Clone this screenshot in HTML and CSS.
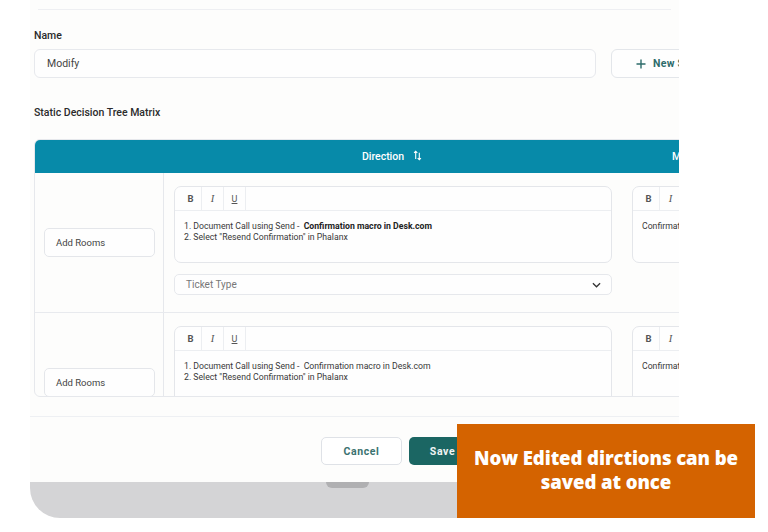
FILE: index.html
```html
<!DOCTYPE html>
<html>
<head>
<meta charset="utf-8">
<link rel="stylesheet" href="styles.css">
</head>
<body>
<div class="stage">
  <div class="modal">
    <div class="topline"></div>
    <div class="content">
      <div class="label">Name</div>
      <div class="name-row">
        <div class="input">Modify</div>
        <div class="new-btn">
          <svg class="plus" viewBox="0 0 10 10" width="10" height="10"><path d="M5 0.5V9.5M0.5 5H9.5" stroke="#2d6b6a" stroke-width="1.4" fill="none"/></svg>
          <span>New Step</span>
        </div>
      </div>
      <div class="label section">Static Decision Tree Matrix</div>
      <div class="matrix">
        <div class="mhead">
          <div class="hcell"></div>
          <div class="hcell">Direction
            <svg class="sort" viewBox="0 0 10 12" width="9" height="11"><path d="M3 10V1.5M1.2 3.2L3 1.3L4.8 3.2" stroke="#fff" stroke-width="1.2" fill="none"/><path d="M7 3V10.5M5.2 8.8L7 10.7L8.8 8.8" stroke="#fff" stroke-width="1.2" fill="none"/></svg>
          </div>
          <div class="hcell">Macro</div>
        </div>
        <div class="mrow">
          <div class="lcell"><div class="rooms">Add Rooms</div></div>
          <div class="dcell">
            <div class="editor">
              <div class="toolbar"><span class="tb b">B</span><span class="tb i">I</span><span class="tb u">U</span></div>
              <div class="etext">1. Document Call using Send - &nbsp;<strong>Confirmation macro in Desk.com</strong><br>2. Select "Resend Confirmation" in Phalanx</div>
            </div>
            <div class="select"><span>Ticket Type</span>
              <svg viewBox="0 0 10 6" width="9" height="6"><path d="M1 1L5 5L9 1" stroke="#333" stroke-width="1.4" fill="none"/></svg>
            </div>
          </div>
          <div class="mcell">
            <div class="editor">
              <div class="toolbar"><span class="tb b">B</span><span class="tb i">I</span><span class="tb u">U</span></div>
              <div class="etext">Confirmation macro</div>
            </div>
          </div>
        </div>
        <div class="mrow">
          <div class="lcell"><div class="rooms">Add Rooms</div></div>
          <div class="dcell">
            <div class="editor">
              <div class="toolbar"><span class="tb b">B</span><span class="tb i">I</span><span class="tb u">U</span></div>
              <div class="etext">1. Document Call using Send - &nbsp;Confirmation macro in Desk.com<br>2. Select "Resend Confirmation" in Phalanx</div>
            </div>
            <div class="select"><span>Ticket Type</span>
              <svg viewBox="0 0 10 6" width="9" height="6"><path d="M1 1L5 5L9 1" stroke="#333" stroke-width="1.4" fill="none"/></svg>
            </div>
          </div>
          <div class="mcell">
            <div class="editor">
              <div class="toolbar"><span class="tb b">B</span><span class="tb i">I</span><span class="tb u">U</span></div>
              <div class="etext">Confirmation macro</div>
            </div>
          </div>
        </div>
      </div>
    </div>
    <div class="sep"></div>
    <div class="footer">
      <div class="btn cancel">Cancel</div>
      <div class="btn save">Save</div>
    </div>
  </div>
  <div class="base"><div class="pill"></div></div>
</div>
<div class="callout">Now Edited dirctions can be saved at once</div>
</body>
</html>
```

FILE: styles.css
```css
* { box-sizing: border-box; }
html, body { margin: 0; padding: 0; background: #fff; }
body {
  font-family: Roboto, "Liberation Sans", sans-serif;
  color: #333;
  position: relative;
  width: 768px;
  height: 532px;
  overflow: hidden;
}
.stage {
  margin-left: 30px;
  width: 649px;
  height: 518px;
  overflow: hidden;
  border-bottom-left-radius: 30px;
  display: flex;
  flex-direction: column;
}
.modal {
  flex: none;
  width: 750px;
  height: 482px;
  background: #fdfdfc;
  padding-top: 9px;
}
.topline {
  margin-left: 8px;
  width: 633px;
  height: 1px;
  background: #eeeff2;
}
.content { padding: 0 4px; }
.label {
  margin-top: 19px;
  font-size: 10.5px;
  line-height: 13px;
  font-weight: 500;
  color: #2b2b2b;
}
.label.section { margin-top: 28px; }
.name-row {
  margin-top: 7px;
  display: flex;
  gap: 15px;
}
.input {
  width: 562px;
  height: 29px;
  border: 1px solid #e7e9ed;
  border-radius: 6px;
  background: #fefefe;
  padding-left: 12px;
  font-size: 10.5px;
  color: #444;
  display: flex;
  align-items: center;
}
.new-btn {
  width: 120px;
  height: 29px;
  border: 1px solid #e3e6ea;
  border-radius: 6px;
  background: #fefefe;
  display: flex;
  align-items: center;
  padding-left: 24px;
  gap: 7px;
  color: #2d6b6a;
  font-weight: 700;
  font-size: 10.5px;
  letter-spacing: 0.3px;
}
.matrix {
  margin-top: 20px;
  width: 730px;
  height: 258px;
  border: 1px solid #e6e8ec;
  border-radius: 6px;
  overflow: hidden;
}
.mhead, .mrow {
  display: grid;
  grid-template-columns: 129px 458px 1fr;
}
.mhead {
  height: 34px;
  background: #078aa9;
  color: #fff;
  font-size: 10.5px;
  font-weight: 500;
  margin: -1px -1px 0 -1px;
  border-radius: 6px 6px 0 0;
  border-top: 1px solid #58aec4;
}
.hcell {
  display: flex;
  align-items: center;
  justify-content: center;
  gap: 9px;
}
.mhead .hcell:last-child { justify-content: flex-start; padding-left: 51px; }
.sort { margin-top: -3px; }
.mrow {
  height: 140px;
  border-bottom: 1px solid #e8eaee;
}
.lcell {
  border-right: 1px solid #e6e8ec;
  display: flex;
  align-items: center;
  padding-left: 9px;
}
.rooms {
  width: 111px;
  height: 29px;
  border: 1px solid #e4e6ea;
  border-radius: 5px;
  background: #fefefe;
  font-size: 9.5px;
  color: #444;
  display: flex;
  align-items: center;
  padding-left: 11px;
}
.dcell { padding: 13px 10px 0 10px; }
.mcell { padding: 13px 0 0 10px; }
.editor {
  height: 77px;
  border: 1px solid #e4e6ea;
  border-radius: 7px;
  background: #fefefe;
  overflow: hidden;
}
.mcell .editor { width: 300px; }
.toolbar {
  height: 24px;
  border-bottom: 1px solid #eceef1;
  display: flex;
  padding-left: 5px;
}
.tb {
  width: 22px;
  border-right: 1px solid #eceef1;
  display: flex;
  align-items: center;
  justify-content: center;
  font-size: 9.5px;
  color: #555;
}
.tb.b { font-weight: 700; }
.tb.i { font-style: italic; font-family: "Liberation Serif", serif; font-size: 10.5px; }
.tb.u { text-decoration: underline; font-size: 9px; }
.etext {
  padding: 10px 9px;
  font-size: 8.7px;
  line-height: 11px;
  color: #383838;
  white-space: nowrap;
}
.etext strong { font-weight: 700; color: #222; }
.select {
  margin-top: 11px;
  height: 21px;
  border: 1px solid #e6e8ec;
  border-radius: 5px;
  background: #fefefe;
  display: flex;
  align-items: center;
  justify-content: space-between;
  padding: 0 10px 0 11px;
  font-size: 10px;
  color: #777;
}
.sep {
  margin-top: 19px;
  height: 1px;
  background: #eef0f3;
}
.footer {
  margin-top: 20px;
  display: flex;
  justify-content: center;
  gap: 7px;
  padding-left: 1px;
}
.btn {
  width: 81px;
  height: 28px;
  border-radius: 5px;
  display: flex;
  align-items: center;
  justify-content: center;
  font-size: 10.5px;
  font-weight: 700;
  letter-spacing: 0.6px;
}
.cancel {
  border: 1px solid #dfe2e7;
  background: #fff;
  color: #3b7270;
}
.save {
  background: #1b6663;
  color: #f0f4f4;
  padding-right: 14px;
}
.base {
  flex: none;
  height: 36px;
  background: #d4d4d6;
  padding-left: 296px;
}
.pill {
  width: 43px;
  height: 6px;
  background: #b0b0b2;
  border-radius: 0 0 6px 6px;
}
.callout {
  position: absolute;
  left: 457px;
  top: 424px;
  width: 298px;
  height: 94px;
  background: #d46300;
  color: #fff;
  font-family: "Open Sans", "Noto Sans", sans-serif;
  font-weight: 800;
  font-size: 18.6px;
  line-height: 24px;
  text-align: center;
  padding: 22px 10px 0 10px;
  letter-spacing: -0.1px;
}
```
